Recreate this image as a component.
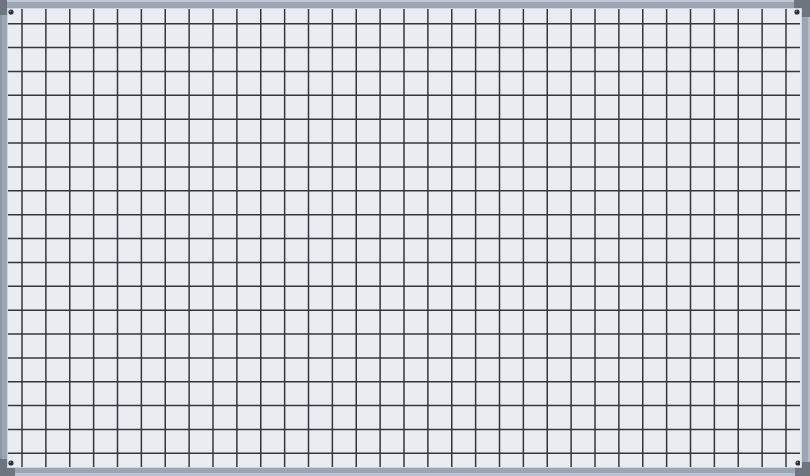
import React from "react";

const V = Array.from({ length: 33 }, (_, k) => 14 + k * 23.875);
const H = Array.from({ length: 19 }, (_, k) => 14.7 + k * 23.87);

export default function App() {
  return (
    <div className="relative w-[810px] h-[476px] bg-[#9aa6b6] pt-[8px] pl-[7px] pr-[8px] pb-[8px]">
      <div className="absolute inset-x-0 top-0 h-[2px] bg-[#c3cad4]" />
      <div className="absolute inset-y-0 left-0 w-[2px] bg-[#8b97a8]" />
      <div className="absolute inset-x-0 bottom-0 h-[3px] bg-[#b9c1cc]" />
      <div className="absolute inset-y-0 right-0 w-[2px] bg-[#b3bcc8]" />
      {/* corner caps */}
      <div className="absolute left-0 top-0 w-[7px] h-[15px] bg-[#6f757e]" />
      <div className="absolute right-0 top-0 w-[16px] h-[8px] bg-[#6f757e]" />
      <div className="absolute right-0 top-0 w-[8px] h-[17px] bg-[#6f757e]" />
      <div className="absolute left-0 bottom-0 w-[15px] h-[8px] bg-[#6f757e]" />
      <div className="absolute left-0 bottom-0 w-[7px] h-[17px] bg-[#6f757e]" />
      <div className="absolute right-0 bottom-0 w-[15px] h-[8px] bg-[#6f757e]" />
      <div className="absolute right-0 bottom-0 w-[8px] h-[14px] bg-[#6f757e]" />
      <div className="relative w-full h-full bg-[#e9edf1] border border-[#cfd5dc]">
        <svg className="absolute inset-0" width="792" height="458" viewBox="0 0 792 458">
          {V.map((x, i) => (
            <line key={"v" + i} x1={x} y1={0} x2={x} y2={458} stroke="#33373c" strokeWidth={1.5} />
          ))}
          {H.map((y, i) => (
            <line key={"h" + i} x1={0} y1={y} x2={792} y2={y} stroke="#33373c" strokeWidth={1.5} />
          ))}
          {[
            [3, 3],
            [789, 3],
            [3, 454],
            [790, 454],
          ].map(([cx, cy], i) => (
            <g key={"s" + i}>
              <circle cx={cx} cy={cy} r={2.6} fill="#2e3136" />
              <circle cx={cx - 0.7} cy={cy - 0.7} r={0.8} fill="#8a9099" />
            </g>
          ))}
        </svg>
      </div>
    </div>
  );
}
